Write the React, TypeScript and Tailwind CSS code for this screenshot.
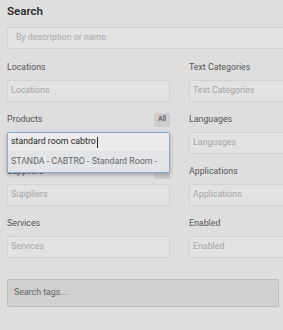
import React from "react";

const left = [
  { label: "Locations", badge: false },
  { label: "Products", badge: true },
  { label: "Suppliers", badge: true },
  { label: "Services", badge: false },
];
const right = ["Text Categories", "Languages", "Applications", "Enabled"];

function Field({ label, badge, focus }: { label: string; badge?: boolean; focus?: boolean }) {
  return (
    <div className="relative h-[52px]">
      <div className="flex h-[25px] items-center justify-between">
        <span className="text-[8.8px] text-[#555]">{label}</span>
        {badge && (
          <span className="flex h-[14px] w-[16px] items-center justify-center rounded-[2px] bg-[#cdcdcd] text-[7px] font-medium text-[#555]">
            All
          </span>
        )}
      </div>
      <div className="flex h-[22px] items-center rounded-[2px] border border-[#d2d2d2] bg-[#e2e2e2] px-[3px] text-[8.8px] text-[#a6a6a6]">
        {label}
      </div>
      {focus && (
        <div className="absolute left-0 right-0 top-[25px] z-10 overflow-hidden rounded-[2px] border border-[#93a3cf] bg-[#e6e6e6] shadow-[0_2px_4px_rgba(0,0,0,0.25)]">
          <div className="flex h-[18px] items-center whitespace-nowrap bg-[#ececec] px-[3px] text-[8.8px] text-[#1e1e1e]">
            standard room cabtro<span className="ml-px h-[11px] w-px bg-[#222]" />
          </div>
          <div className="flex h-[21px] items-center whitespace-nowrap bg-[#e3e4e7] px-[3px] text-[8.8px] text-[#666]">
            STANDA - CABTRO - Standard Room -
          </div>
        </div>
      )}
    </div>
  );
}

export default function App() {
  return (
    <div
      className="h-[330px] w-[283px] overflow-hidden bg-[#dedede]"
      style={{ fontFamily: "Roboto, 'Noto Sans', sans-serif" }}
    >
      <div className="w-[351px] pl-[7px] pt-[2px]">
        <h2 className="text-[11.5px] font-semibold leading-[18px] text-[#2d2d2d]">Search</h2>
        <div className="mt-[7px] flex h-[22px] items-center rounded-[2px] border border-[#d2d2d2] bg-[#e2e2e2] px-[8px] text-[8.8px] text-[#aaaaaa]">
          By description or name
        </div>
        <div className="mt-[6px] grid grid-cols-[163px_163px] gap-x-[19px]">
          <div>
            {left.map((f) => (
              <Field key={f.label} label={f.label} badge={f.badge} focus={f.label === "Products"} />
            ))}
          </div>
          <div>
            {right.map((r) => (
              <Field key={r} label={r} />
            ))}
          </div>
        </div>
        <div className="mt-[16px] flex h-[28px] w-[272px] items-center rounded-[2px] border border-[#bdbdbd] bg-[#d0d0d0] px-[6px] text-[8.8px] text-[#666]">
          Search tags...
        </div>
      </div>
    </div>
  );
}
